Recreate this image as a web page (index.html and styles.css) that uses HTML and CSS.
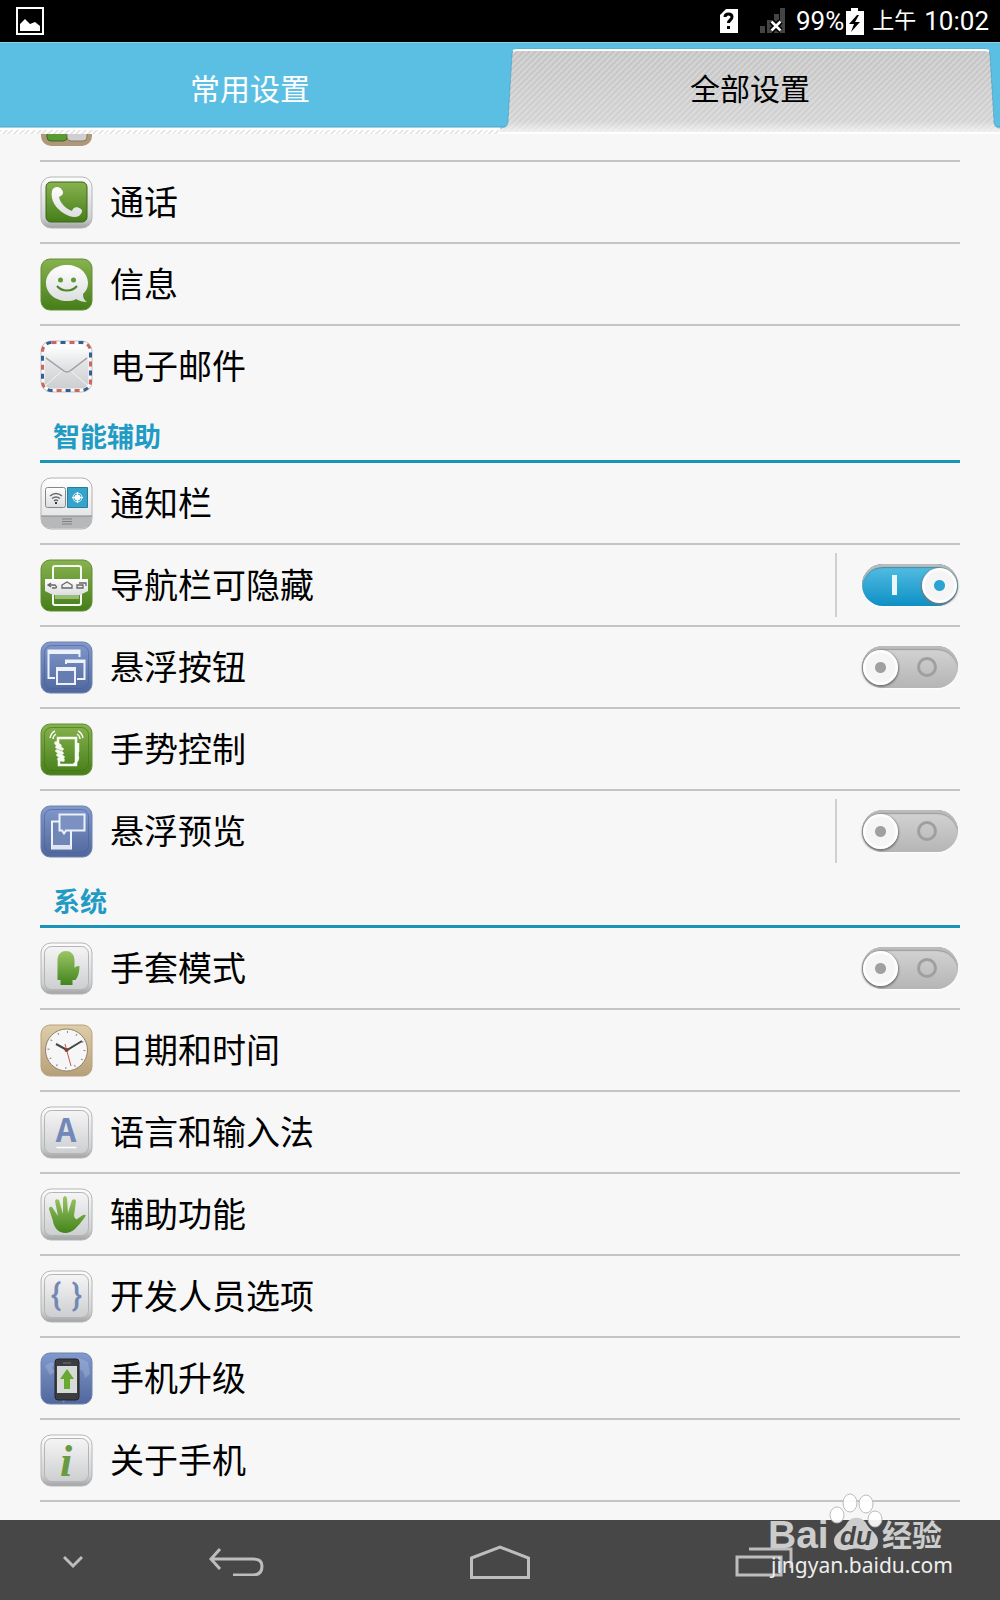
FILE: index.html
```html
<!DOCTYPE html>
<html lang="zh-CN">
<head>
<meta charset="utf-8">
<meta name="viewport" content="width=device-width, initial-scale=1">
<title>设置</title>
<link rel="stylesheet" href="styles.css">
</head>
<body>
<svg class="defs" width="0" height="0" aria-hidden="true">
  <defs>
    <linearGradient id="silver" x2="0" y2="1"><stop offset="0" stop-color="#fdfdfd"/><stop offset=".8" stop-color="#cfd0d2"/><stop offset="1" stop-color="#a2a3a4"/></linearGradient>
    <linearGradient id="plate" x2="0" y2="1"><stop offset="0" stop-color="#f5f5f6"/><stop offset="1" stop-color="#cdced0"/></linearGradient>
    <linearGradient id="green" x2="0" y2="1"><stop offset="0" stop-color="#88b250"/><stop offset="1" stop-color="#447e18"/></linearGradient>
    <linearGradient id="leaf" x2="0" y2="1"><stop offset="0" stop-color="#9bc566"/><stop offset="1" stop-color="#43841c"/></linearGradient>
    <linearGradient id="blue" x2="0" y2="1"><stop offset="0" stop-color="#8199cc"/><stop offset="1" stop-color="#50679d"/></linearGradient>
    <linearGradient id="tan" x2="0" y2="1"><stop offset="0" stop-color="#dfcdaa"/><stop offset="1" stop-color="#b6a079"/></linearGradient>
    <linearGradient id="white" x2="0" y2="1"><stop offset="0" stop-color="#fff"/><stop offset="1" stop-color="#dcdddf"/></linearGradient>
    <linearGradient id="tabfill" x2="0" y2="1"><stop offset="0" stop-color="#c3c3c3"/><stop offset=".85" stop-color="#d2d2d2"/><stop offset="1" stop-color="#f3f3f3"/></linearGradient>
    <pattern id="hatch" width="6" height="6" patternUnits="userSpaceOnUse"><path d="M-1 7 7-1M-1 1 1-1M5 7 7 5" stroke="#fff" stroke-opacity=".25" stroke-width="2"/></pattern>
    <g id="silverkey">
      <rect x="1" y="1" width="51" height="51" rx="10" fill="url(#silver)" stroke="#b5b6b7"/>
      <rect x="4.500" y="4.500" width="44" height="43" rx="7" fill="url(#plate)" stroke="#b3b4b6"/>
    </g>
    <g id="bluekey">
      <rect x="1" y="1" width="51" height="51" rx="9" fill="url(#blue)" stroke="#6f82ac"/>
      <rect x="4.500" y="4.500" width="44" height="43" rx="7" fill="none" stroke="#4a619a" stroke-opacity=".6"/>
    </g>
  </defs>
</svg>

<header class="status">
  <svg class="shot" viewBox="0 0 28 28" role="img" aria-label="截图"><path d="M1 1h26v26H1z" fill="none" stroke="#fff" stroke-width="2"/><path d="M4 24v-7l5-5 5 5 5-2 5 4v5z" fill="#fff"/></svg>
  <svg class="sim" viewBox="0 0 18 26" aria-hidden="true"><path d="M6 1h12v24H0V7z" fill="#fff"/><path d="M5 9c0-4 7-4 7 0 0 3-3.500 3-3.500 6" fill="none" stroke="#000" stroke-width="3"/><path d="M7 18h3v3H7z"/></svg>
  <svg class="signal" viewBox="0 0 26 26" aria-hidden="true"><path d="M0 18h5v7H0zM7 12h5v13H7zM14 6h5v19h-5zM20 0h5v25h-5z" fill="#444"/><path d="m11.500 13.500 9 9m0-9-9 9" stroke="#000" stroke-width="6"/><path d="m11.500 13.500 9 9m0-9-9 9" stroke="#fff" stroke-width="2.500"/></svg>
  <span class="percent">99%</span>
  <svg class="battery" viewBox="0 0 18 27" aria-hidden="true"><path d="M5 0h7v3h6v24H0V3h5z" fill="#fff"/><path d="M11 7 3 16h5l-3 8 9-10H9l4-7z"/></svg>
  <span class="ampm">上午</span>
  <time class="clock">10:02</time>
</header>

<nav class="tabs">
  <button class="tab" type="button">常用设置</button>
  <button class="tab tab-active" type="button" aria-current="page">
    <svg class="tab-shape" viewBox="0 0 500 92" preserveAspectRatio="none" aria-hidden="true">
      <path d="M-2 92v-6c7 0 10-1 10-7L12 13q0-6 6-6H484q6 0 6 6l4 66c0 6 3 7 8 7v6z" fill="url(#tabfill)" stroke="#4b9cba" stroke-opacity=".7"/>
      <path d="M-2 92v-6c7 0 10-1 10-7L12 13q0-6 6-6H484q6 0 6 6l4 66c0 6 3 7 8 7v6z" fill="url(#hatch)"/>
      <path d="M13 9q2-1 5-1H484q3 0 5 1M0 91h500" fill="none" stroke="#fff" stroke-width="2"/>
    </svg>
    <span class="tab-label">全部设置</span>
  </button>
</nav>

<main class="settings">
  <section class="group">
    <div class="row row-clipped">
      <svg class="icon-clip" viewBox="0 40 53 13" aria-hidden="true"><rect x="1" y="1" width="51" height="51" rx="10" fill="#ad9979"/><rect x="7" y="27" width="20" height="20" rx="4" fill="#5b9a30" stroke="#3f661f"/><rect x="27" y="27" width="20" height="20" rx="4" fill="#cfcfd0" stroke="#88795e"/></svg>
    </div>
    <a class="row" href="#call">
      <svg class="icon" viewBox="0 0 53 53" aria-hidden="true"><rect x="1" y="1" width="51" height="51" rx="10" fill="url(#silver)" stroke="#b5b6b7"/><rect x="6" y="6" width="41" height="40" rx="5" fill="url(#green)" stroke="#3c6517"/><path d="M12 15c1-4 7-6 10-1 2 3 1 5-3 7 1 6 7 12 13 14 1-4 5-5 9-2 2 2 1 4-2 7-4 2-9 1-14-2-9-5-15-14-13-23z" fill="url(#white)"/></svg>
      <span class="name">通话</span>
    </a>
    <a class="row" href="#messages">
      <svg class="icon" viewBox="0 0 53 53" aria-hidden="true"><rect x="1" y="1" width="51" height="51" rx="9" fill="url(#green)" stroke="#648b37"/><path d="M27 7c12 0 21 8 21 18 0 5-2 8-5 11 0 4 1 6 4 8-4 0-8-1-11-3-3 2-6 2-9 2C15 43 6 35 6 25S15 7 27 7z" fill="url(#white)"/><circle cx="20.500" cy="22" r="2.500" fill="#629a37"/><circle cx="33.500" cy="22" r="2.500" fill="#629a37"/><path d="M17 28c5 6 15 6 20 0" fill="none" stroke="#4e8525" stroke-width="2"/></svg>
      <span class="name">信息</span>
    </a>
    <a class="row row-last" href="#email">
      <svg class="icon" viewBox="0 0 53 53" aria-hidden="true"><rect x="1" y="1" width="51" height="51" rx="10" fill="#fafafa" stroke="#c2c2c4"/><rect x="2.500" y="2.500" width="48" height="48" rx="9" fill="none" stroke="#cc6660" stroke-width="3" stroke-dasharray="5 13"/><rect x="2.500" y="2.500" width="48" height="48" rx="9" fill="none" stroke="#355f94" stroke-width="3" stroke-dasharray="5 13" stroke-dashoffset="9"/><rect x="4.500" y="4.500" width="44" height="44" rx="7" fill="url(#plate)"/><path d="M5 46 24 29M48 46 29 29" stroke="#f5f5f5"/><path d="M5 15V11q0-6 6-6h31q6 0 6 6v5L30 30q-3 2-6 0z" fill="url(#white)"/><path d="M6 18 24 31q3 2 6 0l17-13" fill="none" stroke="#9c9da0" stroke-width="1.500"/></svg>
      <span class="name">电子邮件</span>
    </a>
  </section>

  <section class="group">
    <h2 class="heading">智能辅助</h2>
    <a class="row" href="#notifications">
      <svg class="icon" viewBox="0 0 53 53" aria-hidden="true"><rect x="1" y="1" width="51" height="51" rx="10" fill="url(#white)" stroke="#b1b2b3"/><path d="M1.500 39h50v3q0 9-9 9h-32q-9 0-9-9z" fill="#b7b8ba"/><path d="M1 39h51" stroke="#858689"/><rect x="5.500" y="10.500" width="20" height="20" rx="2" fill="url(#white)" stroke="#85878a"/><path d="M27.500 10.500h20v20h-20z" fill="#36a3ca" stroke="#287d9e"/><path d="M10 19q6-5 12 0M12 21.500q4-3 8 0M14 24q2-2 4 0" fill="none" stroke="#67696b" stroke-width="1.500"/><circle cx="16" cy="26" r="1"/><circle cx="37.500" cy="20.500" r="3" fill="#fff"/><circle cx="37.500" cy="20.500" r="4.500" fill="none" stroke="#e4f7ff"/><path d="M37.500 15v3m0 5v3M32 20.500h3m5 0h3" stroke="#fff"/><path d="M22 42h10M22 44.500h10M22 47h10" stroke="#808184"/></svg>
      <span class="name">通知栏</span>
    </a>
    <div class="row">
      <svg class="icon" viewBox="0 0 53 53" aria-hidden="true"><rect x="1" y="1" width="51" height="51" rx="9" fill="url(#green)" stroke="#648b37"/><path d="M13 20V9q0-2 2-2h24q2 0 2 2v11M13 35v9q0 2 2 2h24q2 0 2-2v-9" fill="none" stroke="#f6f9f2" stroke-width="2"/><path d="M15 34h24v6H15z" fill="#c6dcae" fill-opacity=".6"/><path d="M5 20h43v12l-8 4H13l-8-4z" fill="url(#white)"/><path d="m11 24-3 2 3 2M8 26h7q3 3 0 3h-3M22 29v-3l5-3 5 3v3zM37 26h6v3h-6zm2-2h7v3" fill="none" stroke="#666" stroke-width="1.300"/></svg>
      <label class="name" for="nav-hide">导航栏可隐藏</label>
      <span class="control control-divided"><input class="switch" id="nav-hide" type="checkbox" role="switch" checked></span>
    </div>
    <div class="row">
      <svg class="icon" viewBox="0 0 53 53" aria-hidden="true"><use href="#bluekey"/><path d="M15 37H8.500V9.500h31V16" fill="none" stroke="#edf1fa" stroke-width="2"/><path d="M8 9h32v4H8z" fill="#edf1fa"/><path d="M26 23v-3.500h18.500V38H37" fill="none" stroke="#edf1fa" stroke-width="2"/><path d="M25 19h20v3H25z" fill="#edf1fa"/><path d="M17 27h18v16H17z" fill="#657db0" stroke="#edf1fa" stroke-width="2"/><path d="M16 26h20v4H16z" fill="#edf1fa"/></svg>
      <label class="name" for="float-button">悬浮按钮</label>
      <span class="control"><input class="switch" id="float-button" type="checkbox" role="switch"></span>
    </div>
    <a class="row" href="#gestures">
      <svg class="icon" viewBox="0 0 53 53" aria-hidden="true"><rect x="1" y="1" width="51" height="51" rx="9" fill="url(#green)" stroke="#648b37"/><rect x="4.500" y="4.500" width="44" height="43" rx="7" fill="none" stroke="#3d7413" stroke-opacity=".6"/><path d="M18 20v-5h18v27H19v-6M38 20v8q-1 3 0 7-1 5-5 7" fill="none" stroke="#f7faf3" stroke-width="2.500"/><path d="m16 20 4 3m-3 1 5 2m-5 2 5 2m-4 2 5 2m-4 2 4 1" stroke="#f7faf3" stroke-width="3.500" stroke-linecap="round"/><path d="M10 15q1-5 5-7m-2 8q0-3 3-5M43 15q-1-5-5-7m2 8q0-3-3-5" fill="none" stroke="#f2f8ea" stroke-width="1.500"/></svg>
      <span class="name">手势控制</span>
    </a>
    <div class="row row-last">
      <svg class="icon" viewBox="0 0 53 53" aria-hidden="true"><use href="#bluekey"/><path d="M12 16.500h19v27H12z" fill="#7086b7" stroke="#edf1fa" stroke-width="2"/><path d="M12 40h19v4H12z" fill="#dfe5f3"/><path d="M19.500 9.500h25v16H26l-2 3-2-3h-2.500z" fill="#7b91c1" stroke="#edf1fa" stroke-width="2"/></svg>
      <label class="name" for="float-preview">悬浮预览</label>
      <span class="control control-divided"><input class="switch" id="float-preview" type="checkbox" role="switch"></span>
    </div>
  </section>

  <section class="group">
    <h2 class="heading">系统</h2>
    <div class="row">
      <svg class="icon" viewBox="0 0 53 53" aria-hidden="true"><use href="#silverkey"/><path d="M17.500 38V18c0-12 17-12 17 0v8q1-2 5-2 0 9-4 14h-3v5h-12v-5z" fill="url(#leaf)"/></svg>
      <label class="name" for="glove">手套模式</label>
      <span class="control"><input class="switch" id="glove" type="checkbox" role="switch"></span>
    </div>
    <a class="row" href="#datetime">
      <svg class="icon" viewBox="0 0 53 53" aria-hidden="true"><rect x="1" y="1" width="51" height="51" rx="9" fill="url(#tan)" stroke="#b8a27c"/><circle cx="26.500" cy="26" r="21" fill="#f6f6f6" stroke="#91816a"/><circle cx="26.500" cy="26" r="18" fill="none" stroke="#888" stroke-width="2" stroke-dasharray="1 8.425"/><path d="m16 20 11 6 15-9" fill="none" stroke="#4b4545" stroke-width="2"/><path d="m25 20 6 22" stroke="#ca5650"/><circle cx="26.500" cy="26" r="2" fill="#873f3c"/></svg>
      <span class="name">日期和时间</span>
    </a>
    <a class="row" href="#language">
      <svg class="icon" viewBox="0 0 53 53" aria-hidden="true"><use href="#silverkey"/><text class="glyph-a" x="26" y="36" text-anchor="middle">A</text><path d="M16.500 41.500h20" stroke="#fff" stroke-width="1.500"/></svg>
      <span class="name">语言和输入法</span>
    </a>
    <a class="row" href="#accessibility">
      <svg class="icon" viewBox="0 0 53 53" aria-hidden="true"><use href="#silverkey"/><path d="M13 33 9 21q0-3 3-2l6 9-3-15q1-3 4-1l4 14V10q2-4 4 0l1 15 4-13q3-2 4 1l-2 15q1 4 3 3l6-4q4-1 2 2-5 7-10 12c-8 7-19 5-22-7z" fill="url(#leaf)"/></svg>
      <span class="name">辅助功能</span>
    </a>
    <a class="row" href="#developer">
      <svg class="icon" viewBox="0 0 53 53" aria-hidden="true"><use href="#silverkey"/><text class="glyph-brace" x="16" y="36" text-anchor="middle">{</text><text class="glyph-brace" x="37" y="36" text-anchor="middle">}</text></svg>
      <span class="name">开发人员选项</span>
    </a>
    <a class="row" href="#update">
      <svg class="icon" viewBox="0 0 53 53" aria-hidden="true"><rect x="1" y="1" width="51" height="51" rx="9" fill="url(#blue)" stroke="#6f82ac"/><path d="M5 14q5-5 9-3l-2 5 3 4-5 3zM39 6l9 4 2 12-5 4-2-7-5-2zM20 44l7 3-4 4z" fill="#aabadd" fill-opacity=".4"/><rect x="15" y="7" width="24" height="41" rx="3" fill="#3c3d40" stroke="#242529"/><path d="M17 14h20v27H17z" fill="#d8dad7"/><path d="m27 17 7 10h-4v10h-6V27h-4z" fill="#68a932"/><path d="M23 11h8" stroke="#777"/></svg>
      <span class="name">手机升级</span>
    </a>
    <a class="row" href="#about">
      <svg class="icon" viewBox="0 0 53 53" aria-hidden="true"><use href="#silverkey"/><text class="glyph-i" x="26" y="42" text-anchor="middle">i</text></svg>
      <span class="name">关于手机</span>
    </a>
  </section>
</main>

<footer class="navbar">
  <button class="key key-hide" type="button" aria-label="隐藏"><svg width="20" height="16" viewBox="0 0 20 16"><path d="m1 3 9 9 9-9" stroke-width="3"/></svg></button>
  <button class="key" type="button" aria-label="返回"><svg width="56" height="28" viewBox="0 0 56 28"><path d="M3 11h42q9 0 9 7 0 9-9 9H25M12 1 3 11l9 10" stroke-width="3"/></svg></button>
  <button class="key" type="button" aria-label="主页"><svg width="60" height="34" viewBox="0 0 60 34"><path d="M1.500 13 30 2l28.500 11v19.500h-57z" stroke-width="3"/></svg></button>
  <button class="key" type="button" aria-label="最近任务"><svg width="58" height="30" viewBox="0 0 58 30"><path d="M2 10h44v18H2zM14 2h42v19" stroke-width="3"/></svg></button>
  <svg class="watermark" viewBox="0 0 190 90" role="img" aria-label="Baidu 经验">
    <g fill="#fff" fill-opacity=".92" stroke="#bbb"><ellipse cx="75" cy="23" rx="7" ry="8"/><ellipse cx="88" cy="11" rx="7" ry="9"/><ellipse cx="104" cy="12" rx="7" ry="9"/><ellipse cx="113" cy="27" rx="7" ry="8"/></g>
    <path d="M72 49c0-8 10-11 13-18 4-7 15-7 19 0 3 7 12 10 12 18 0 7-6 10-12 9-7-2-12-2-19 0-7 1-13-2-13-9z" fill="#ccc"/>
    <text class="wm-bai" x="6" y="56">Bai</text>
    <text class="wm-du" x="94" y="53" text-anchor="middle">du</text>
    <text class="wm-cn" x="120" y="54">经验</text>
    <text class="wm-url" x="9" y="81">jingyan.baidu.com</text>
  </svg>
</footer>
</body>
</html>
```

FILE: styles.css
```css
* { box-sizing: border-box; }

body {
  margin: 0;
  min-height: 100vh;
  display: flex;
  flex-direction: column;
  background: #f7f7f7;
  color: #000;
  font-family: "Noto Sans CJK SC", sans-serif;
}

button { margin: 0; padding: 0; border: 0; background: none; font: inherit; }
a { color: inherit; text-decoration: none; }
.defs { position: absolute; }

/* status bar */
.status {
  height: 42px;
  padding: 0 11px 0 16px;
  display: flex;
  align-items: center;
  background: #000;
  color: #fff;
  font-family: Roboto, "Noto Sans CJK SC", sans-serif;
  font-size: 26px;
  line-height: 30px;
}
.shot { width: 28px; height: 28px; margin-right: auto; }
.sim { width: 18px; height: 26px; margin-right: 22px; }
.signal { width: 26px; height: 26px; margin-right: 10px; }
.battery { width: 18px; height: 27px; margin: 0 8px 0 2px; }
.ampm { margin-right: 8px; font-size: 22px; }

/* tabs */
.tabs {
  height: 92px;
  display: grid;
  grid-template-columns: 1fr 1fr;
  background:
    linear-gradient(#8ccfe8 0 1px, #5bbfe4 1px 84px, #4d9fc0 85px, #fff 86px 88px, transparent 88px),
    repeating-linear-gradient(135deg, #fff 0 2px, #e8e8e8 2px 4px);
}
.tab {
  position: relative;
  padding-bottom: 2px;
  color: #fff;
  font-size: 30px;
  line-height: 44px;
}
.tab-active { color: #000; }
.tab-shape { position: absolute; inset: 0; width: 100%; height: 100%; }
.tab-label { position: relative; }

/* settings list */
.settings { flex: 1; padding: 0 40px 18px; }
.row {
  height: 82px;
  display: flex;
  align-items: center;
  gap: 17px;
  border-bottom: 2px solid #c4c4c4;
}
.row-last { border-bottom-color: transparent; }
.row-clipped { height: 28px; align-items: flex-start; }
.icon { width: 53px; height: 53px; }
.icon-clip { width: 53px; height: 13px; }
.name { flex: 1; padding-bottom: 2px; font-size: 34px; line-height: 48px; }
.heading {
  height: 55px;
  margin: 0;
  padding: 8px 13px 0;
  border-bottom: 3px solid #1b94b9;
  color: #1f9bc4;
  font-size: 27px;
  font-weight: 700;
  line-height: 40px;
}

.control {
  height: 64px;
  padding: 0 2px 0 25px;
  display: flex;
  align-items: center;
}
.control-divided { border-left: 2px solid #d0d0d0; }

.switch {
  appearance: none;
  width: 96px;
  height: 42px;
  margin: 0;
  padding: 3px 1px;
  display: flex;
  align-items: center;
  justify-content: space-between;
  border-radius: 21px;
  background: linear-gradient(#d4d4d4, #b5b5b5);
  box-shadow: inset 0 3px 1px #bcbcbc, inset 0 4px 1px #999, 0 1px 2px #fff;
}
.switch::before {
  content: "";
  width: 35px;
  height: 35px;
  border-radius: 50%;
  background: radial-gradient(circle, #a0a0a0 0 5px, #f5f5f5 6px 14px, #fff 16px);
  box-shadow: 0 1px 2px 1px #777;
}
.switch::after {
  content: "";
  box-sizing: border-box;
  width: 20px;
  height: 20px;
  margin-right: 20px;
  border: 3px solid #9f9f9f;
  border-radius: 50%;
}
.switch:checked {
  flex-direction: row-reverse;
  background: linear-gradient(#58bfe4, #0d90c5);
  box-shadow: inset 0 3px 1px #bcbcbc, inset 0 4px 1px #398ca9, 0 1px 2px #fff;
}
.switch:checked::before {
  background: radial-gradient(circle, #2ca4d1 0 5px, #f5f5f5 6px 14px, #fff 16px);
}
.switch:checked::after {
  width: 5px;
  height: 20px;
  margin: 0 0 0 29px;
  border: 0;
  border-radius: 0;
  background: #e9f7fd;
}

.glyph-a { font: 700 32px "Noto Sans CJK SC", sans-serif; fill: #7288b8; }
.glyph-brace { font: 500 31px Roboto, sans-serif; fill: #7387b4; }
.glyph-i { font: italic 700 44px "Liberation Serif", serif; fill: #689b40; }

/* navigation bar */
.navbar {
  position: relative;
  height: 80px;
  display: grid;
  grid-template-columns: 104px repeat(3, 1fr) 104px;
  background: #474747;
}
.key { display: flex; align-items: center; justify-content: center; padding-top: 4px; }
.key-hide { justify-content: flex-end; padding-right: 21px; }
.key svg { fill: none; stroke: #bdbdbd; }

/* watermark overlapping list and navigation bar */
.watermark {
  position: absolute;
  right: 48px;
  bottom: 18px;
  width: 190px;
  height: 90px;
  pointer-events: none;
}
.wm-bai { font: 700 39px "Liberation Sans", sans-serif; fill: #ccc; }
.wm-du { font: italic 700 26px "Liberation Sans", sans-serif; fill: #444; }
.wm-cn { font: 700 30px "Noto Sans CJK SC", sans-serif; fill: #ccc; }
.wm-url { font: 400 21px "Noto Sans", sans-serif; fill: #eee; }
```
